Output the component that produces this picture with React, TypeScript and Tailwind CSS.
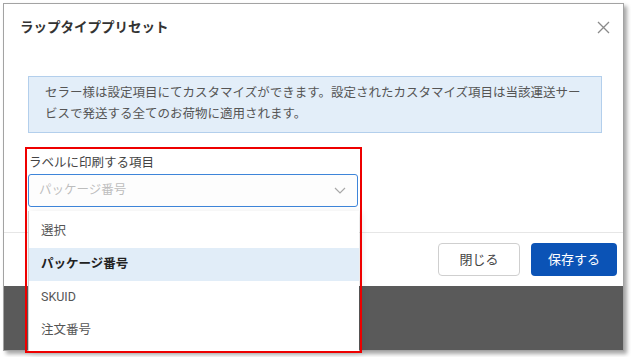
import React from "react";

const options = [
  { id: 1, label: "選択", selected: false },
  { id: 2, label: "パッケージ番号", selected: true },
  { id: 3, label: "SKUID", selected: false },
  { id: 4, label: "注文番号", selected: false },
];

export default function App() {
  return (
    <div className="relative w-[631px] h-[357px] bg-white font-['Roboto','Noto_Sans_CJK_JP',sans-serif] overflow-hidden">
      {/* framed screenshot */}
      <div className="pl-[3px] pt-[3px]">
        <div className="w-[621px] h-[348px] border border-[#a3a3a3] shadow-[3px_3px_4px_rgba(0,0,0,0.35)] flex flex-col">
          <div className="h-[282px] bg-white flex flex-col">
            {/* header */}
            <div className="h-[46px] flex items-center justify-between pl-4 pr-3">
              <h2 className="text-[13.5px] leading-5 font-bold text-[#333]">ラップタイププリセット</h2>
              <svg width="13" height="13" viewBox="0 0 13 13" className="mr-[1px]">
                <path d="M1 1L12 12M12 1L1 12" stroke="#8a8a8a" strokeWidth="1.3" fill="none" />
              </svg>
            </div>

            {/* body */}
            <div className="flex-1 pl-6">
              <div className="mt-[26px] w-[574px] h-[57px] border border-[#b3cfec] bg-[#e3eef9] pl-4 pt-[5px] text-[12.5px] leading-[21px] text-[#555] whitespace-nowrap">
                <p>セラー様は設定項目にてカスタマイズができます。設定されたカスタマイズ項目は当該運送サー</p>
                <p>ビスで発送する全てのお荷物に適用されます。</p>
              </div>
              <div className="mt-[21px] pl-px text-[12.5px] leading-[18px] text-[#444]">ラベルに印刷する項目</div>
              <div className="mt-[2px] w-[330px] h-[33px] border border-[#3e85d9] rounded-[3px] bg-[#fdfdfd] flex items-center justify-between pl-[10px] pr-[11px]">
                <span className="text-[12.5px] text-[#bdbdbd]">パッケージ番号</span>
                <svg width="12" height="7" viewBox="0 0 12 7">
                  <path d="M1 1L6 6L11 1" stroke="#a8a8a8" strokeWidth="1.2" fill="none" />
                </svg>
              </div>
            </div>

            {/* footer */}
            <div className="h-[54px] border-t border-[#e6e6e6] flex items-center justify-end gap-[11px] pr-[6px]">
              <button className="w-[82px] h-[33px] rounded-[4px] border border-[#cfcfcf] bg-white text-[13px] text-[#444]">
                閉じる
              </button>
              <button className="w-[86px] h-[33px] rounded-[4px] bg-[#0b53b6] text-[13px] text-white">
                保存する
              </button>
            </div>
          </div>
          <div className="flex-1 bg-[#5a5a5a]" />
        </div>
      </div>

      {/* dropdown menu */}
      <div className="absolute left-[28px] top-[211px] w-[331px] h-[141px] bg-white border-l border-[#cfcfcf] shadow-[2px_2px_8px_rgba(0,0,0,0.12)] pt-[4px]">
        {options.map((o) => (
          <div
            key={o.id}
            className={`h-[33px] flex items-center pl-[12px] text-[12.5px] ${
              o.selected ? "bg-[#e1edf8] font-bold text-[#222]" : "text-[#555]"
            }`}
          >
            {o.label}
          </div>
        ))}
      </div>

      {/* annotation */}
      <div className="absolute left-[25px] top-[147px] w-[337px] h-[206px] border-2 border-[#ee0000] pointer-events-none" />
    </div>
  );
}
